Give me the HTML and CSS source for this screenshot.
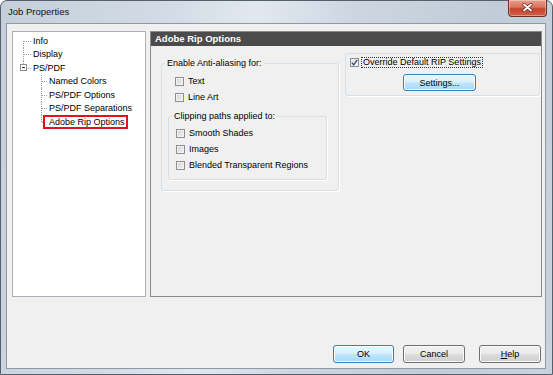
FILE: index.html
```html
<!DOCTYPE html>
<html lang="en">
<head>
    <meta charset="UTF-8">
    <title>Job Properties</title>
    <link rel="stylesheet" href="styles.css">
</head>
<body>
    <div class="window">
        <div class="titlebar">
            <span class="title">Job Properties</span>
            <button class="close-btn" title="Close">
                <svg width="11" height="9" viewBox="0 0 11 9">
                    <path d="M2 1.5 L9 7.5 M9 1.5 L2 7.5" stroke="#6b2a22" stroke-width="3.2" stroke-linecap="round"/>
                    <path d="M2 1.5 L9 7.5 M9 1.5 L2 7.5" stroke="#fff" stroke-width="1.8" stroke-linecap="round"/>
                </svg>
            </button>
        </div>

        <div class="client">
            <div class="panes">
                <div class="tree-pane">
                    <ul class="tree">
                        <li class="first"><div class="row"><span>Info</span></div></li>
                        <li><div class="row"><span>Display</span></div></li>
                        <li class="last">
                            <div class="row"><i class="toggle"></i><span>PS/PDF</span></div>
                            <ul class="tree-children">
                                <li><div class="row"><span>Named Colors</span></div></li>
                                <li><div class="row"><span>PS/PDF Options</span></div></li>
                                <li><div class="row"><span>PS/PDF Separations</span></div></li>
                                <li class="last"><div class="row"><span class="selected">Adobe Rip Options</span></div></li>
                            </ul>
                        </li>
                    </ul>
                </div>

                <div class="page-pane">
                    <div class="page-header">Adobe Rip Options</div>
                    <div class="page-body">
                        <fieldset class="group aa-group">
                            <legend>Enable Anti-aliasing for:</legend>
                            <label class="opt"><span class="check"></span>Text</label>
                            <label class="opt"><span class="check"></span>Line Art</label>

                            <fieldset class="group clip-group">
                                <legend>Clipping paths applied to:</legend>
                                <label class="opt"><span class="check"></span>Smooth Shades</label>
                                <label class="opt"><span class="check"></span>Images</label>
                                <label class="opt"><span class="check"></span>Blended Transparent Regions</label>
                            </fieldset>
                        </fieldset>

                        <div class="group rip-group">
                            <label class="opt">
                                <span class="check checked">
                                    <svg width="7" height="7" viewBox="0 0 7 7">
                                        <path d="M0.8 3.6 L2.7 5.8 L6.3 0.8" fill="none" stroke="#3a4f7d" stroke-width="1.4"/>
                                    </svg>
                                </span>
                                <span class="focus">Override Default RIP Settings</span>
                            </label>
                            <button class="btn btn-blue settings-btn">Settings...</button>
                        </div>
                    </div>
                </div>
            </div>

            <div class="footer">
                <button class="btn btn-blue ok-btn">OK</button>
                <button class="btn cancel-btn">Cancel</button>
                <button class="btn help-btn"><u>H</u>elp</button>
            </div>
        </div>
    </div>
</body>
</html>
```

FILE: styles.css
```css
* {
    box-sizing: border-box;
}

body {
    margin: 0;
    font-family: "Liberation Sans", Arial, sans-serif;
    font-size: 9px;
    color: #000;
    background: #fff;
}

.window {
    width: 553px;
    height: 375px;
    display: flex;
    flex-direction: column;
    border: 1px solid #56606c;
    border-radius: 7px 7px 0 0;
    background: linear-gradient(100deg, #c4cfdb 0%, #d3dce5 28%, #e2e8ef 42%, #cdd6e0 58%, #c1ccd8 80%, #c9d3de 100%);
}

.titlebar {
    height: 22px;
    display: flex;
    align-items: flex-start;
    justify-content: space-between;
    padding-left: 7px;
}

.title {
    font-size: 9.5px;
    line-height: 22px;
    color: #111;
}

.close-btn {
    width: 39px;
    height: 17px;
    margin-top: -1px;
    margin-right: 5px;
    padding: 0 0 2px;
    border: 1px solid #6f2e25;
    border-top: none;
    border-radius: 0 0 4px 4px;
    background: linear-gradient(#e8a08c 0%, #d9735c 45%, #c5432c 55%, #d0604a 100%);
    box-shadow: inset 0 0 0 1px rgba(255,255,255,0.35);
    display: flex;
    align-items: center;
    justify-content: center;
}

.client {
    flex: 1;
    margin: 0 6px 5px 5px;
    border: 1px solid #8d99a6;
    background: #f0f0f0;
    padding: 7px 3px 5px 5px;
    display: flex;
    flex-direction: column;
}

.panes {
    height: 266px;
    display: flex;
    gap: 4px;
}

/* tree */
.tree-pane {
    width: 134px;
    border: 1px solid #abb0b8;
    background: #fff;
    padding-top: 2px;
}

.tree, .tree-children {
    list-style: none;
    margin: 0;
    padding: 0 0 0 10px;
}

.tree-children {
    padding-left: 18px;
}

.row {
    position: relative;
    height: 13.5px;
    display: flex;
    align-items: center;
    padding-left: 10px;
    white-space: nowrap;
}

.tree-children .row {
    padding-left: 8px;
}

.row::before {
    content: '';
    position: absolute;
    left: 0;
    top: 0;
    bottom: 0;
    border-left: 1px dotted #a0a0a0;
}

.row::after {
    content: '';
    position: absolute;
    left: 1px;
    top: 50%;
    width: 7px;
    border-top: 1px dotted #a0a0a0;
}

.tree-children .row::after {
    width: 5px;
}

.first > .row::before {
    top: 50%;
}

.last > .row::before {
    bottom: 50%;
}

.toggle {
    position: absolute;
    left: -3px;
    top: 50%;
    margin-top: -3.5px;
    width: 7px;
    height: 7px;
    border: 1px solid #8f8f8f;
    background: #fff;
    z-index: 1;
}

.toggle::after {
    content: '';
    position: absolute;
    left: 1px;
    top: 2px;
    width: 3px;
    border-top: 1px solid #333;
}

.selected {
    position: relative;
    z-index: 1;
    margin-left: -6px;
    padding: 0 1px 0 4px;
    line-height: 10px;
    border: 2px solid #e3131b;
    background: #fff;
}

/* right page */
.page-pane {
    width: 392px;
    border: 1px solid #8a8a8a;
    background: #f0f0f0;
}

.page-header {
    height: 14px;
    line-height: 14px;
    padding-left: 4px;
    background: #4b4b4b;
    color: #fff;
    font-weight: bold;
    font-size: 9.5px;
}

.page-body {
    display: flex;
    align-items: flex-start;
    gap: 6px;
    padding: 7px 0 0 10px;
}

.group {
    margin: 0;
    min-width: 0;
    padding: 0;
    border: 1px solid #d5dfe5;
    border-radius: 3px;
    box-shadow: 1px 1px 0 #fff;
}

.group legend {
    margin-left: 3px;
    padding: 0 2px;
    line-height: 11px;
}

.aa-group {
    width: 178px;
    margin-top: 5px;
    padding: 4px 0 10px;
}

.aa-group > .opt {
    padding-left: 13px;
}

.clip-group {
    width: 159px;
    margin: 6px 0 0 6px;
    padding: 3px 0 6px;
}

.clip-group .opt {
    padding-left: 7px;
}

.opt {
    display: flex;
    align-items: center;
    gap: 4px;
    height: 16px;
    white-space: nowrap;
}

.check {
    width: 9px;
    height: 9px;
    flex: none;
    border: 1px solid #8e8f8f;
    background: linear-gradient(135deg, #cfd1d4, #f3f3f3);
    box-shadow: inset 0 0 0 1px #f2f2f2;
    display: flex;
    align-items: center;
    justify-content: center;
}

.check.checked {
    background: linear-gradient(135deg, #e4e6ea, #fbfbfb);
}

.rip-group {
    width: 195px;
    height: 43px;
    padding: 3px 0 0 4px;
}

.rip-group .opt {
    height: 11px;
    gap: 2px;
}

.focus {
    line-height: 9px;
    padding: 0 1px;
    border: 1px dotted #333;
}

/* buttons */
.btn {
    height: 18px;
    padding: 0;
    font-family: inherit;
    font-size: 9px;
    color: #000;
    border: 1px solid #707070;
    border-radius: 3px;
    background: linear-gradient(#f2f2f2 0%, #ebebeb 48%, #dddddd 52%, #cfcfcf 100%);
    box-shadow: inset 0 0 0 1px #fbfbfb;
}

.btn-blue {
    border-color: #3c7fb1;
    background: linear-gradient(#eaf6fd 0%, #d9f0fc 48%, #bee6fd 52%, #a7d9f5 100%);
    box-shadow: inset 0 0 0 1px #f5fbfe;
}

.settings-btn {
    display: block;
    width: 73px;
    height: 17px;
    margin: 6px 0 0 53px;
}

.footer {
    margin-top: auto;
    display: flex;
    justify-content: flex-end;
}

.ok-btn {
    width: 61px;
    margin-right: 9px;
}

.cancel-btn {
    width: 62px;
    margin-right: 14px;
}

.help-btn {
    width: 62px;
    margin-right: 1px;
}
```
